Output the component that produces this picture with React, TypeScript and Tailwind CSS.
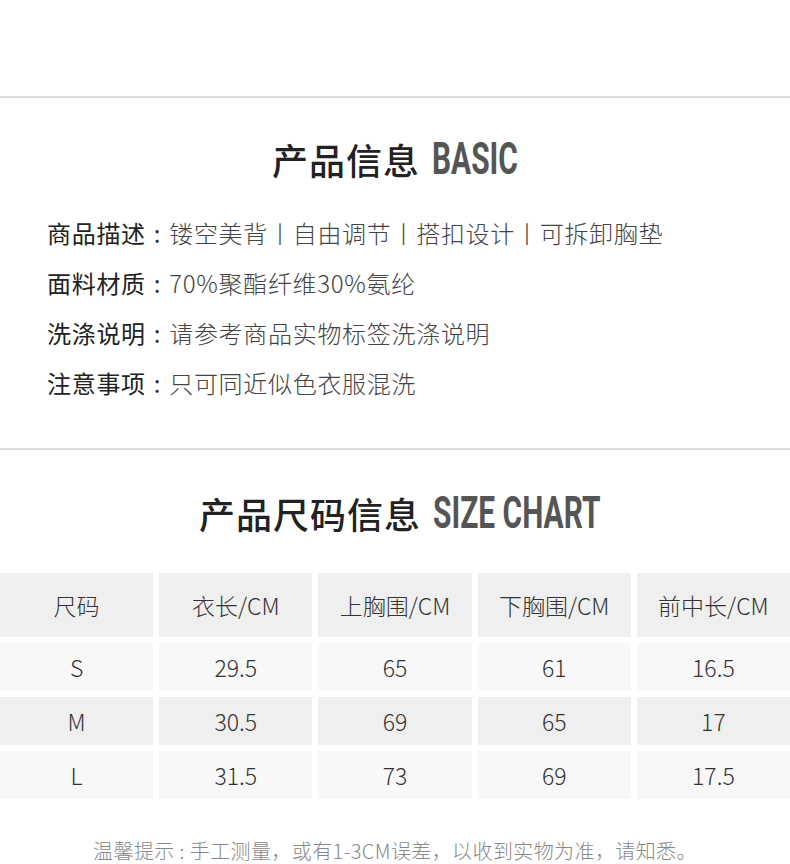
const cjk = "font-['Noto_Sans_CJK_SC','Noto_Sans',sans-serif]";

const info = [
  { label: "商品描述", value: "镂空美背丨自由调节丨搭扣设计丨可拆卸胸垫" },
  { label: "面料材质", value: "70%聚酯纤维30%氨纶" },
  { label: "洗涤说明", value: "请参考商品实物标签洗涤说明" },
  { label: "注意事项", value: "只可同近似色衣服混洗" },
];

const head = ["尺码", "衣长/CM", "上胸围/CM", "下胸围/CM", "前中长/CM"];
const rows = [
  ["S", "29.5", "65", "61", "16.5"],
  ["M", "30.5", "69", "65", "17"],
  ["L", "31.5", "73", "69", "17.5"],
];

function Title({ cn, en, enWidth }: { cn: string; en: string; enWidth: string }) {
  return (
    <h2 className="flex h-[44px] items-center justify-center gap-[12px]">
      <span className={`${cjk} text-[36px] font-medium tracking-[1px] text-[#222]`}>{cn}</span>
      <span className={`${enWidth} overflow-visible whitespace-nowrap font-['Roboto',sans-serif] text-[44px] font-bold leading-none text-[#555]`}>
        <span className="inline-block origin-left scale-x-[0.68]">{en}</span>
      </span>
    </h2>
  );
}

export default function App() {
  return (
    <div className={`${cjk} w-[790px] bg-white`}>
      <div className="h-[96px]" />
      <div className="h-[2px] bg-[#dcdcdc]" />

      <div className="mt-[39px]">
        <Title cn="产品信息" en="BASIC" enWidth="w-[86px]" />
      </div>

      <div className="mt-[27px] pl-[47px] text-[24px] tracking-[0.7px] text-[#333]">
        {info.map((row) => (
          <div key={row.label} className="flex h-[50px] items-center">
            <span className="text-[#222]">{row.label}</span>
            <span className="mx-[8px]">:</span>
            <span className="font-light text-[#444]">{row.value}</span>
          </div>
        ))}
      </div>

      <div className="mt-[40px] h-[2px] bg-[#dcdcdc]" />

      <div className="mt-[41px]">
        <Title cn="产品尺码信息" en="SIZE CHART" enWidth="w-[158px]" />
      </div>

      <div className="mt-[38px] grid grid-cols-5 gap-[6px] text-[23px] font-light text-[#333]">
        {head.map((h) => (
          <div key={h} className="flex h-[64px] items-center justify-center bg-[#efefef]">
            {h}
          </div>
        ))}
        {rows.map((r, i) =>
          r.map((c, j) => (
            <div
              key={`${i}-${j}`}
              className={`flex h-[48px] items-center justify-center ${
                i === 1 ? "bg-[#efefef]" : "bg-[#f8f8f8]"
              }`}
            >
              {c}
            </div>
          ))
        )}
      </div>

      <p className="mt-[40px] h-[24px] text-center text-[20px] font-light leading-[24px] tracking-[0.4px] text-[#888]">
        温馨提示 : 手工测量，或有1-3CM误差，以收到实物为准，请知悉。
      </p>
    </div>
  );
}
